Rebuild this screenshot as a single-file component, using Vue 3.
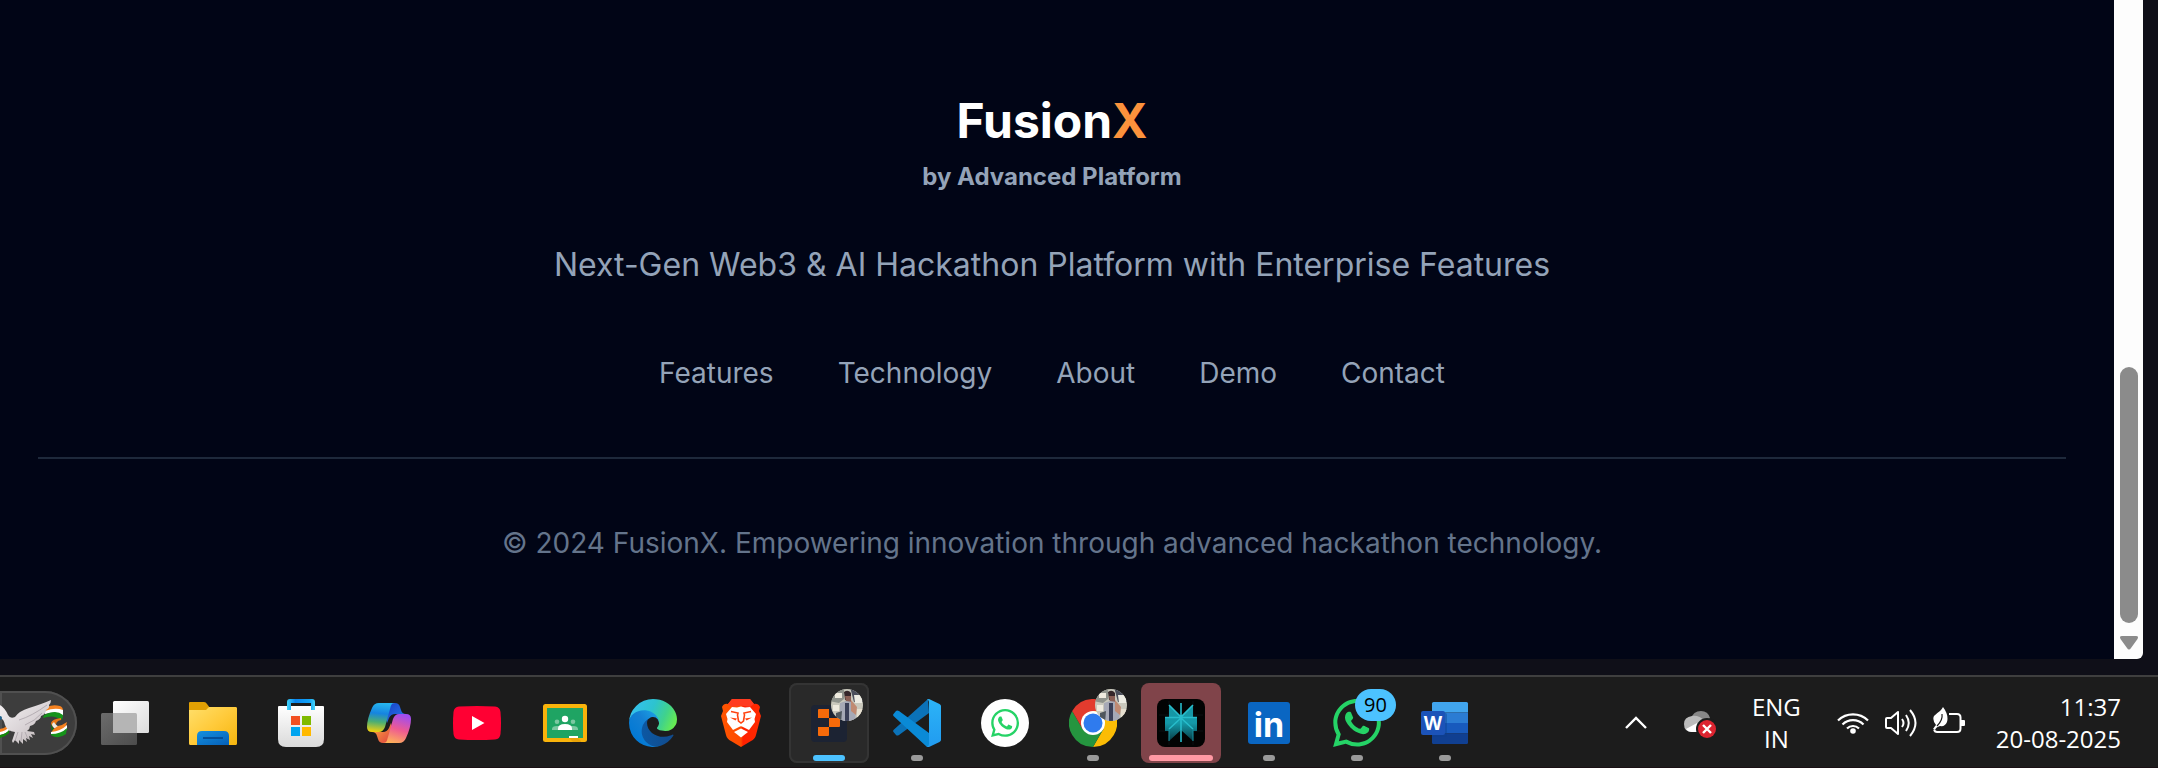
<script setup>
const links = ['Features', 'Technology', 'About', 'Demo', 'Contact']

const apps = [
  { id: 'tasks', label: 'Task view' },
  { id: 'files', label: 'File Explorer' },
  { id: 'store', label: 'Microsoft Store' },
  { id: 'copilot', label: 'Copilot' },
  { id: 'youtube', label: 'YouTube' },
  { id: 'classroom', label: 'Classroom' },
  { id: 'edge', label: 'Edge' },
  { id: 'brave', label: 'Brave' },
  { id: 'blocks', label: 'Web app', state: 'active' },
  { id: 'code', label: 'Visual Studio Code', state: 'open' },
  { id: 'waweb', label: 'WhatsApp Web' },
  { id: 'chrome', label: 'Chrome', state: 'open' },
  { id: 'perplexity', label: 'Perplexity', state: 'alert' },
  { id: 'linkedin', label: 'LinkedIn', state: 'open' },
  { id: 'whatsapp', label: 'WhatsApp', state: 'open', badge: 90 },
  { id: 'word', label: 'Word', state: 'open' },
]

const waPath =
  'M17.472 14.382c-.297-.149-1.758-.867-2.03-.967-.273-.099-.471-.148-.67.15-.197.297-.767.966-.94 1.164-.173.199-.347.223-.644.075-.297-.15-1.255-.463-2.39-1.475-.883-.788-1.48-1.761-1.653-2.059-.173-.297-.018-.458.13-.606.134-.133.298-.347.446-.52.149-.174.198-.298.298-.497.099-.198.05-.371-.025-.52-.075-.149-.669-1.612-.916-2.207-.242-.579-.487-.5-.669-.51-.173-.008-.371-.01-.57-.01-.198 0-.52.074-.792.372-.272.297-1.04 1.016-1.04 2.479 0 1.462 1.065 2.875 1.213 3.074.149.198 2.096 3.2 5.077 4.487.709.306 1.262.489 1.694.625.712.227 1.36.195 1.871.118.571-.085 1.758-.719 2.006-1.413.248-.694.248-1.289.173-1.413-.074-.124-.272-.198-.57-.347m-5.421 7.403h-.004a9.87 9.87 0 01-5.031-1.378l-.361-.214-3.741.982.998-3.648-.235-.374a9.86 9.86 0 01-1.51-5.26c.001-5.45 4.436-9.884 9.888-9.884 2.64 0 5.122 1.03 6.988 2.898a9.825 9.825 0 012.893 6.994c-.003 5.45-4.437 9.884-9.885 9.884m8.413-18.297A11.815 11.815 0 0012.05 0C5.495 0 .16 5.335.157 11.892c0 2.096.547 4.142 1.588 5.945L.057 24l6.305-1.654a11.882 11.882 0 005.683 1.448h.005c6.554 0 11.89-5.335 11.893-11.893a11.821 11.821 0 00-3.48-8.413z'
</script>

<template>
  <div class="screen">
    <div class="window">
      <footer class="footer">
        <h2 class="brand">Fusion<span class="accent">X</span></h2>
        <p class="byline">by Advanced Platform</p>
        <p class="tagline">Next-Gen Web3 &amp; AI Hackathon Platform with Enterprise Features</p>
        <nav class="links">
          <a v-for="link in links" :key="link" href="#">{{ link }}</a>
        </nav>
        <p class="copyright">© 2024 FusionX. Empowering innovation through advanced hackathon technology.</p>
      </footer>
      <div class="scrollbar">
        <div class="thumb"></div>
        <svg class="arrow" viewBox="0 0 18 14" width="18" height="14">
          <path d="M2 0H16Q19 0 17.500 3L11 12Q9 15 7 12L.5 3Q-1 0 2 0Z" fill="#8b8b8b" />
        </svg>
      </div>
    </div>

    <div class="taskbar">
      <button class="widget" aria-label="Search highlights">
        <svg viewBox="0 0 77 64" width="77" height="64">
          <defs>
            <linearGradient id="feather" x1="0" y1="0" x2="1" y2="1">
              <stop offset="0" stop-color="#f4f1f2" />
              <stop offset=".55" stop-color="#d9d3d6" />
              <stop offset="1" stop-color="#b0a6a6" />
            </linearGradient>
          </defs>
          <path d="M0 38Q5 37 8 34L9 37Q5 41 0 42Z" fill="#f58220" />
          <path d="M0 41Q6 40 9 36L10 39Q6 43 0 44Z" fill="#fff" />
          <path d="M0 44Q6 43 9 39L9 42Q5 46 0 47Z" fill="#138808" />
          <path d="M47 16Q53 13 60 15Q63 16 63 20Q55 16 45 21Z" fill="#f58220" />
          <path d="M45 20Q55 16 63 19V25Q56 19 45 23Z" fill="#fff" />
          <path d="M44 24Q56 18 63 24Q63 28 61 29Q54 23 43 27Z" fill="#16931a" />
          <path d="M61 27Q52 28 51 32Q51 36 56 36Q55 30 61 29Z" fill="#e87817" />
          <path d="M54 31Q56 35 62 37L59 40Q52 37 52 33Z" fill="#e9e9e2" />
          <path d="M51 33Q52 39 59 41L57 43Q51 40 51 36Z" fill="#0f7a12" />
          <path d="M67 31Q63 34 58 35Q52 38 51 43Q61 42 66 35Z" fill="#f58220" />
          <path d="M67 34Q61 40 51 41L51 44Q62 44 67 38Z" fill="#fff" />
          <path d="M51 43Q61 43 67 37L66 43Q58 49 51 44Z" fill="#16931a" />
          <path
            d="M0 14Q5 17 8 24Q10 28 15 26Q19 20 29 17Q42 13 51 9Q51 12 49 14Q50 17 46 19Q46 23 41 25Q41 28 36 30Q35 34 30 35Q30 38 27 40L34 41 35 44 31 43 33 47 29 45 30 49 26 47 27 51 23 48 23 53 19 49 19 53 15 49 13 52 12 50 15 41Q7 40 5 34Q4 28 0 27Z"
            fill="url(#feather)"
          />
          <path d="M19 29Q32 25 47 14M25 34Q35 30 42 22M18 41L15 50M22 41L21 50M25 41L28 48" stroke="#aaa2a8" stroke-width=".8" fill="none" />
          <circle cx="0" cy="27" r="2" fill="#1c5f8a" />
        </svg>
      </button>

      <button
        v-for="app in apps"
        :key="app.id"
        class="app"
        :class="app.state"
        :aria-label="app.label"
      >
        <svg class="icon" viewBox="0 0 48 48" width="48" height="48">
          <g v-if="app.id === 'tasks'">
            <defs>
              <linearGradient id="tv1" x1="0" y1="0" x2="1" y2="1"><stop stop-color="#fff" /><stop offset="1" stop-color="#dcdcdc" /></linearGradient>
              <linearGradient id="tv2" x1="0" y1="0" x2="1" y2="1"><stop stop-color="#6c6c6c" /><stop offset="1" stop-color="#4c4c4c" /></linearGradient>
            </defs>
            <rect y="14" width="36" height="32" rx="1.500" fill="url(#tv2)" />
            <rect x="12" y="2" width="36" height="32" rx="1.500" fill="url(#tv1)" />
            <path d="M12 14H34.500Q36 14 36 15.500V34H12Z" fill="#b5b5b5" />
          </g>

          <g v-else-if="app.id === 'files'">
            <defs>
              <linearGradient id="fo1" x1="0" y1="0" x2="1" y2="1"><stop stop-color="#ffdf6b" /><stop offset=".5" stop-color="#ffca3a" /><stop offset="1" stop-color="#f5b50e" /></linearGradient>
              <linearGradient id="fo2" x1="0" y1="0" x2="1" y2="1"><stop stop-color="#1490df" /><stop offset="1" stop-color="#0660b8" /></linearGradient>
            </defs>
            <path d="M0 4Q0 3 1 3H15Q17 3 18 5L21 9V20H0Z" fill="#e2a003" />
            <path d="M0 11H17L20 8H47Q48 8 48 9.500V44.500Q48 46 46.500 46H1.500Q0 46 0 44.500Z" fill="url(#fo1)" />
            <path d="M8 46V37Q8 32 13 32H35Q40 32 40 37V46Z" fill="url(#fo2)" />
            <path d="M14 39H34" stroke="#044b93" stroke-width="1.800" />
          </g>

          <g v-else-if="app.id === 'store'">
            <defs>
              <linearGradient id="st1" x1="0" y1="0" x2="0" y2="1"><stop stop-color="#fff" /><stop offset="1" stop-color="#dadada" /></linearGradient>
              <linearGradient id="st2" x1="0" y1="0" x2="1" y2="0"><stop stop-color="#3cd4fb" /><stop offset=".3" stop-color="#0a86f0" /><stop offset=".8" stop-color="#13a3f5" /><stop offset="1" stop-color="#45d6fb" /></linearGradient>
            </defs>
            <path d="M2 7H46Q47 7 47 8V40Q47 48 39 48H9Q1 48 1 40V8Q1 7 2 7Z" fill="url(#st1)" />
            <path d="M10 11V3Q10 0 13 0H35Q38 0 38 3V11H34V4H14V11Z" fill="url(#st2)" />
            <rect x="14" y="17" width="9" height="9" fill="#f25022" />
            <rect x="25" y="17" width="9" height="9" fill="#7fba00" />
            <rect x="14" y="28" width="9" height="9" fill="#00a4ef" />
            <rect x="25" y="28" width="9" height="9" fill="#ffb900" />
          </g>

          <g v-else-if="app.id === 'copilot'">
            <defs>
              <linearGradient id="co1" x1=".4" y1="0" x2=".3" y2="1"><stop stop-color="#26b5ef" /><stop offset=".35" stop-color="#1684e0" /><stop offset=".65" stop-color="#4cae73" /><stop offset="1" stop-color="#f3d10d" /></linearGradient>
              <linearGradient id="co2" x1=".6" y1="0" x2=".3" y2="1"><stop stop-color="#a04df0" /><stop offset=".5" stop-color="#ee5a92" /><stop offset="1" stop-color="#ffb258" /></linearGradient>
              <linearGradient id="co3" x1="0" y1="0" x2="1" y2="1"><stop stop-color="#173ec4" /><stop offset="1" stop-color="#2a7dee" /></linearGradient>
              <linearGradient id="co4" x1="0" y1="0" x2="1" y2="1"><stop stop-color="#ffb13c" /><stop offset="1" stop-color="#dd3d42" /></linearGradient>
            </defs>
            <path d="M24 4H30Q34 4 35 8L36 11Q37 15 41 15H30Q26 15 24 19L22 24 20 15Z" fill="url(#co3)" />
            <path d="M24 44H18Q14 44 13 40L12 37Q11 33 7 33H18Q22 33 24 29L26 24 28 33Z" fill="url(#co4)" />
            <path d="M14 4H30C26 4 26 7 25 10L20 28Q18 33 14 33H7Q2 33 2 28Q2 20 7 9Q9 4 14 4Z" fill="url(#co1)" />
            <path d="M34 44H18C22 44 22 41 23 38L28 20Q30 15 34 15H41Q46 15 46 20Q46 28 41 39Q39 44 34 44Z" fill="url(#co2)" />
          </g>

          <g v-else-if="app.id === 'youtube'">
            <path d="M6 7.500Q24 6.500 42 7.500Q47 8 47.500 13Q48.500 24 47.500 35Q47 40 42 40.500Q24 41.500 6 40.500Q1 40 .5 35Q-.5 24 .5 13Q1 8 6 7.500Z" fill="#ff0033" />
            <path d="M19 17L31.500 24 19 31Z" fill="#fff" />
          </g>

          <g v-else-if="app.id === 'classroom'">
            <rect x="2" y="5" width="44" height="38" rx="2.500" fill="#f9b30b" />
            <rect x="6" y="9" width="36" height="30" fill="#1fa463" />
            <g fill="#7bc8a1">
              <circle cx="16" cy="22.800" r="2.300" />
              <circle cx="32" cy="22.800" r="2.300" />
              <path d="M11 31V30Q11 27 16 27T21 30V31ZM27 31V30Q27 27 32 27T37 30V31Z" />
            </g>
            <circle cx="24" cy="20" r="3.200" fill="#fff" />
            <path d="M17 31V29.500Q17 25 24 25T31 29.500V31Z" fill="#fff" />
            <rect x="28" y="37" width="9" height="2" fill="#fff" />
            <path d="M28 39H37L40 42 40 43H32Z" fill="#e8a208" />
          </g>

          <g v-else-if="app.id === 'edge'" transform="scale(.1875) translate(-4.630 -4.920)">
            <defs>
              <linearGradient id="ed1" x1="0" y1="0" x2="1" y2="0"><stop stop-color="#0c59a4" /><stop offset="1" stop-color="#114a8b" /></linearGradient>
              <linearGradient id="ed2" x1=".9" y1=".2" x2=".2" y2=".9"><stop stop-color="#1b9de2" /><stop offset=".4" stop-color="#1480d4" /><stop offset="1" stop-color="#0078d4" /></linearGradient>
              <linearGradient id="ed3" x1="0" y1=".3" x2="1" y2=".6"><stop stop-color="#35c1f1" /><stop offset=".45" stop-color="#2dc3cf" /><stop offset=".75" stop-color="#40d28c" /><stop offset="1" stop-color="#66eb52" /></linearGradient>
            </defs>
            <path fill="url(#ed1)" d="M235.680 195.460a93.730 93.730 0 01-10.540 4.710 101.870 101.870 0 01-35.900 6.460c-47.320 0-88.540-32.550-88.540-74.320A31.480 31.480 0 01117.130 105c-42.800 1.800-53.800 46.400-53.800 72.530 0 73.880 68.090 81.370 82.760 81.370 7.910 0 19.840-2.300 27-4.560l1.310-.44a128.340 128.340 0 0066.600-52.800 4 4 0 00-5.320-5.640z" />
            <path fill="url(#ed2)" d="M110.340 246.340A79.200 79.200 0 0187.600 225 80.720 80.720 0 01117.130 105c3.120-1.470 8.450-4.130 15.540-4a32.350 32.350 0 0125.690 13 31.880 31.880 0 016.360 18.660c0-.21 24.460-79.600-80-79.600-43.900 0-80 41.660-80 78.210a130.150 130.150 0 0012.110 56 128 128 0 00156.380 67.110 75.550 75.550 0 01-62.780-8z" />
            <path fill="url(#ed3)" d="M156.940 153.780c-.81 1.050-3.300 2.500-3.300 5.660 0 2.610 1.700 5.120 4.720 7.230 14.380 10 41.490 8.680 41.560 8.680a59.560 59.560 0 0030.270-8.350 61.380 61.380 0 0030.430-52.880c.26-22.410-8-37.310-11.340-43.910C228.090 28.760 182.350 4.920 132.610 4.920a128 128 0 00-128 126.200c.48-36.540 36.800-66.050 80-66.050 3.500 0 23.460.34 42 10.070 16.340 8.580 24.900 18.940 30.850 29.210 6.180 10.670 7.280 24.150 7.280 29.520s-2.740 13.330-7.800 19.910z" />
          </g>

          <g v-else-if="app.id === 'brave'">
            <defs>
              <linearGradient id="br1" x1="0" y1="0" x2="1" y2="0"><stop stop-color="#ff5500" /><stop offset=".5" stop-color="#ff4a00" /><stop offset=".55" stop-color="#ff2000" /><stop offset="1" stop-color="#ff2a00" /></linearGradient>
            </defs>
            <path d="M15 0H33L37 5Q41 4 43 8L42 12 44 17 39 36Q38 40 34 42L24 48 14 42Q10 40 9 36L4 17 6 12 5 8Q7 4 11 5Z" fill="url(#br1)" />
            <path d="M15 0H33L37 5 33 8 24 6.500 15 8 11 5Z" fill="#ff3b20" />
            <path d="M15 8L20 8.500 24 7.500 28 8.500 33 8 39 15 37.500 20 38 23 32 31 28 29 25 27.500Q24 27 23 27.500L20 29 16 31 10 23 10.500 20 9 15Z" fill="#fff" />
            <path d="M14 12.500L21 14 20.500 16 21.500 22 24 24 26.500 22 27.500 16 27 14 34 12.500" stroke="#ff4310" stroke-width="1.600" fill="none" />
            <path d="M13 18.500L20 19.500 18.500 21.500ZM35 18.500L28 19.500 29.500 21.500Z" fill="#ff4310" />
            <path d="M24 29.500L31 33 24 38.500 17 33Z" fill="#fff" />
          </g>

          <g v-else-if="app.id === 'blocks'">
            <rect x="6" y="6" width="36" height="37" rx="4" fill="#1c2333" />
            <path d="M14 10H24V19H13V11Q13 10 14 10ZM24 19H34Q35 19 35 20V27Q35 28 34 28H24ZM13 28H24V36Q24 37 23 37H14Q13 37 13 36Z" fill="#f66a0a" />
          </g>

          <g v-else-if="app.id === 'code'">
            <defs>
              <linearGradient id="vs1" x1="0" y1="0" x2="0" y2="1"><stop stop-color="#2cb4f7" /><stop offset="1" stop-color="#219bf0" /></linearGradient>
            </defs>
            <path d="M35 0L36 14 6 36Q4 37 3 36L.5 33Q-.5 32 1 30.500Z" fill="#0b72b8" />
            <path d="M1 17.500Q-.5 16 .5 15L3 12Q4 11 6 12L36 34V48H34Z" fill="#0a8ad6" />
            <path d="M36 0L46.500 5Q48 6 48 7V41Q48 42 46.500 43L36 48Q35 48 34 47.500Q36 47 36 45V3Q36 1 34 .5Q35 0 36 0Z" fill="url(#vs1)" />
          </g>

          <g v-else-if="app.id === 'waweb'">
            <circle cx="24" cy="24" r="24" fill="#fff" />
            <path :d="waPath" fill="#25d366" transform="translate(10 10) scale(1.170)" />
          </g>

          <g v-else-if="app.id === 'chrome'">
            <path d="M24 24L3.200 12A24 24 0 0 1 44.800 12Z" fill="#e33b2e" />
            <path d="M24 12H44.800A24 24 0 0 1 24 48L34.400 30Z" fill="#fbbc05" />
            <path d="M3.200 12A24 24 0 0 0 24 48L34.400 30H13.600Z" fill="#25953f" />
            <path d="M3.200 12L13.600 30 24 24V12Z" fill="#e33b2e" />
            <circle cx="24" cy="24" r="12" fill="#fff" />
            <circle cx="24" cy="24" r="9.500" fill="#2f7bee" />
          </g>

          <g v-else-if="app.id === 'perplexity'">
            <defs>
              <linearGradient id="pp1" x1="0" y1="0" x2="0" y2="1"><stop stop-color="#1795a3" /><stop offset=".5" stop-color="#1499a8" /><stop offset="1" stop-color="#083b44" /></linearGradient>
            </defs>
            <rect width="48" height="48" rx="8" fill="#020303" />
            <path d="M2 16H46M2 32H46M12 2V46M36 2V46" stroke="#101a1b" stroke-width=".6" />
            <path d="M12 6L24 18 36 6V18H40V32H36V42L24 31 12 42V32H8V18H12Z" fill="url(#pp1)" />
            <path d="M24 4V43M12 6L24 18 36 6M8 18.500H40M24 19L12 30M24 19L36 30" stroke="#27bccb" stroke-width="1.600" fill="none" />
            <path d="M12 30V42M36 30V42" stroke="#1592a0" stroke-width="1" />
          </g>

          <g v-else-if="app.id === 'linkedin'">
            <rect x="3" y="3" width="42" height="42" rx="3" fill="#0a66c2" />
            <text class="in-mark" x="24" y="38" text-anchor="middle">in</text>
          </g>

          <g v-else-if="app.id === 'whatsapp'">
            <path :d="waPath" fill="#25d366" transform="scale(2)" />
          </g>

          <g v-else-if="app.id === 'word'">
            <path d="M12.500 3H45.500Q47 3 47 4.500V13.500H11V4.500Q11 3 12.500 3Z" fill="#41a5ee" />
            <path d="M11 13.500H47V24H11Z" fill="#2b7cd3" />
            <path d="M11 24H47V34.500H11Z" fill="#185abd" />
            <path d="M11 34.500H47V43.500Q47 45 45.500 45H12.500Q11 45 11 43.500Z" fill="#103f91" />
            <path d="M11 14H24.500Q26 14 26 16V36Q26 38 24 38H11Z" fill="#0d3f8c" opacity=".4" />
            <rect y="12" width="24" height="24" rx="2" fill="#1c53b8" />
            <text class="w-mark" x="12" y="31" text-anchor="middle">W</text>
          </g>
        </svg>

        <svg
          v-if="app.id === 'blocks' || app.id === 'chrome'"
          class="avatar"
          viewBox="0 0 32 32"
          width="32"
          height="32"
        >
          <defs>
            <clipPath :id="'face-' + app.id"><circle cx="16" cy="16" r="16" /></clipPath>
            <filter :id="'soft-' + app.id"><feGaussianBlur stdDeviation=".7" /></filter>
          </defs>
          <g :clip-path="'url(#face-' + app.id + ')'">
            <rect width="32" height="32" fill="#c9c8bc" />
            <g :filter="'url(#soft-' + app.id + ')'">
              <path d="M-2 -2H13V10L8 14 -2 12Z" fill="#8f938c" />
              <path d="M4 4H11V9H4ZM2 16H8V22H2Z" fill="#eeeade" />
              <path d="M19 -2H34V13H23Z" fill="#4b4f5c" />
              <path d="M23 6H31V14H24Z" fill="#ecebe2" />
              <path d="M13 3Q17 0 20 4L20 10 14 11Z" fill="#34282a" />
              <path d="M14 7H20V13H15Z" fill="#8a5e54" />
              <path d="M9 14L15 12 22 13 25 22 24 34H9Z" fill="#a6a9b6" />
              <path d="M14 14L18 14 18 34 14 34Z" fill="#3a4158" />
              <path d="M20 11L26 18 25 26 20 22Z" fill="#c08a72" />
              <path d="M26 20H33V30H26Z" fill="#e6dfcf" />
              <path d="M5 24L11 22 10 34H5Z" fill="#50565c" />
            </g>
          </g>
        </svg>
        <span v-if="app.badge" class="badge">{{ app.badge }}</span>
      </button>

      <div class="tray">
        <button class="tray-item" aria-label="Show hidden icons">
          <svg viewBox="0 0 24 32" width="24" height="32"><path d="M2 21L12 11 22 21" fill="none" stroke="#fff" stroke-width="2.400" /></svg>
        </button>
        <button class="tray-item" aria-label="OneDrive">
          <svg viewBox="0 0 32 32" width="32" height="32">
            <path d="M7 12Q9 4 17 4Q24 4 26 11L20 17 7 14Z" fill="#888" />
            <path d="M8 9Q15 8 21 14L12 25H8Q0 25 0 17Q0 10 8 9Z" fill="#bcbcbc" />
            <path d="M2 22L13 16 16 25H8Q4 25 2 22Z" fill="#fff" />
            <circle cx="23" cy="22" r="11" fill="#1c1c1c" />
            <circle cx="23" cy="22" r="9" fill="#dc2430" />
            <path d="M19 18L27 26M27 18L19 26" stroke="#fff" stroke-width="2.400" />
          </svg>
        </button>
        <button class="tray-item lang">ENG<br />IN</button>
        <button class="tray-item quick" aria-label="Network, volume and battery">
          <svg viewBox="0 0 32 32" width="32" height="32" fill="none" stroke="#fff" stroke-width="2.200">
            <path d="M1 13.500A21.500 21.500 0 0 1 31 13.500M5.500 17.500A15 15 0 0 1 26.500 17.500M10 21.500A8.500 8.500 0 0 1 22 21.500" />
            <circle cx="16" cy="24" r="2.800" fill="#fff" stroke="none" />
          </svg>
          <svg viewBox="0 0 32 32" width="32" height="32" fill="none" stroke="#fff" stroke-width="2">
            <path d="M1 12Q1 11 2 11H6L13 5V27L6 21H2Q1 21 1 20Z" stroke-linejoin="round" />
            <path d="M17 12Q20 16 17 20M21 8Q26.500 16 21 24M25 3Q36 16 25 29" />
          </svg>
          <svg viewBox="0 0 32 32" width="32" height="32" fill="none" stroke="#fff" stroke-width="2">
            <path d="M16 7H24Q27.500 7 27.500 10.500V21.500Q27.500 25 24 25H4Q2 25 1 23" />
            <path d="M28 13H31Q32 13 32 14V18Q32 19 31 19H28Z" fill="#fff" stroke="none" />
            <path d="M10 0Q16 8 14 15Q12 20 7 19Q3 20 2 23L0 22Q2 19 3 18Q-1 13 1 9Q4 6 7 4Q9 2 10 0Z" fill="#fff" stroke="none" />
            <path d="M9 7Q10 13 4 19" stroke="#1c1c1c" stroke-width="1.200" />
          </svg>
        </button>
        <button class="clock">11:37<br />20-08-2025</button>
      </div>
    </div>
  </div>
</template>

<style>
body {
  margin: 0;
  background: #0f0f18;
}
</style>

<style scoped>
.screen {
  display: flex;
  flex-direction: column;
  min-height: 100vh;
  overflow: hidden;
  background: #0f0f18;
}
.window {
  display: flex;
  flex: 1;
  margin: 0 15px 16px 0;
}
.footer {
  flex: 1;
  padding: 93px 48px 93px 38px;
  background: #010516;
  color: #94a3b8;
  font-family: Inter, "Liberation Sans", sans-serif;
  text-align: center;
}
.footer p,
.brand {
  margin: 0;
}
.brand {
  color: #fff;
  font-size: 48px;
  font-weight: 700;
  line-height: 56px;
}
.accent {
  color: #fb923c;
}
.footer .byline {
  margin-top: 10px;
  font-size: 24px;
  font-weight: 700;
  line-height: 36px;
}
.footer .tagline {
  margin-top: 46px;
  font-size: 32px;
  line-height: 48px;
}
.links {
  display: flex;
  justify-content: center;
  gap: 64px;
  margin-top: 62px;
}
.links a {
  color: inherit;
  font-size: 28px;
  line-height: 44px;
  text-decoration: none;
}
.footer .copyright {
  margin-top: 62px;
  padding-top: 62px;
  border-top: 2px solid #1e293b;
  color: #64748b;
  font-size: 28px;
  line-height: 44px;
}
.scrollbar {
  display: flex;
  flex-direction: column;
  align-items: center;
  justify-content: flex-end;
  gap: 13px;
  width: 29px;
  padding-bottom: 9px;
  box-sizing: border-box;
  border-bottom-right-radius: 6px;
  background: #fdfdfd;
}
.thumb {
  width: 18px;
  height: 256px;
  border-radius: 9px;
  background: #8b8b8b;
}
.taskbar {
  display: flex;
  align-items: center;
  gap: 8px;
  padding: 6px 37px 4px 0;
  border-top: 2px solid #3f3f3f;
  border-bottom: 1px solid #1a1014;
  background: #1c1c1c;
}
button {
  margin: 0;
  padding: 0;
  border: 0;
  background: none;
  color: #fff;
  font: 24px/32px "Open Sans", "Noto Sans", sans-serif;
}
button svg {
  display: block;
}
.widget {
  height: 64px;
  border-radius: 0 32px 32px 0;
  background: #3d3d3d;
  box-shadow: inset 0 0 0 2px #505050;
  overflow: hidden;
}
.app {
  position: relative;
  display: flex;
  align-items: center;
  justify-content: center;
  width: 80px;
  height: 80px;
  border-radius: 8px;
}
.open::after,
.active::after,
.alert::after {
  content: "";
  position: absolute;
  bottom: 2px;
  width: 12px;
  height: 6px;
  border-radius: 3px;
  background: #9a9a9a;
}
.active {
  background: #292929;
  box-shadow: inset 0 0 0 2px #343434;
}
.active::after {
  width: 32px;
  background: #4cc2ff;
}
.alert {
  background: #80444a;
}
.alert::after {
  width: 64px;
  background: #ff99a4;
}
.avatar {
  position: absolute;
  top: 6px;
  right: 6px;
}
.badge {
  position: absolute;
  top: 6px;
  left: 38px;
  width: 41px;
  border-radius: 16px;
  background: #4cc2ff;
  color: #000;
  font-size: 20px;
  text-align: center;
}
.in-mark {
  fill: #fff;
  font: 700 34px Inter, sans-serif;
}
.w-mark {
  fill: #fff;
  font: 700 19px "Open Sans", sans-serif;
}
.tray {
  display: flex;
  align-items: center;
  margin-left: auto;
}
.tray-item {
  margin-right: 36px;
}
.quick {
  display: flex;
  gap: 16px;
  margin-right: 31px;
}
.clock {
  text-align: right;
}
</style>
